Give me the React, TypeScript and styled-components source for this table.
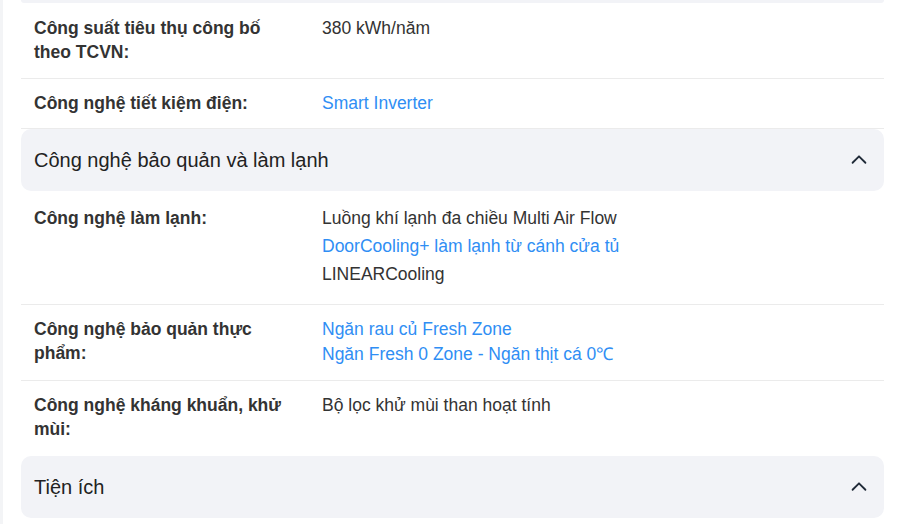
import React from 'react';
import styled, { createGlobalStyle } from 'styled-components';

const GlobalStyle = createGlobalStyle`
  html, body {
    margin: 0;
    padding: 0;
    background: #f3f4f6;
    font-family: 'Liberation Sans', Arial, sans-serif;
  }
`;

const Page = styled.div`
  margin-left: 3px;
  min-height: 524px;
  background: #fff;
  padding: 0 15px 0 18px;
  overflow: hidden;
`;

const HeaderTail = styled.div`
  height: 3px;
  background: #f2f3f7;
  border-radius: 0 0 10px 10px;
`;

const Header = styled.div`
  display: flex;
  align-items: center;
  justify-content: space-between;
  height: 62px;
  padding: 0 14px 0 13px;
  background: #f2f3f7;
  border-radius: 10px;
  color: #222;
  font-size: 20px;

  svg {
    width: 22px;
    height: 22px;
    color: #1f2937;
  }
`;

const Row = styled.div<{ $last?: boolean; $pt: number; $pb: number }>`
  display: grid;
  grid-template-columns: 288px 1fr;
  padding: ${(p) => p.$pt}px 13px ${(p) => p.$pb}px;
  border-bottom: ${(p) => (p.$last ? 'none' : '1px solid #ebebeb')};
`;

const Label = styled.div`
  padding-right: 30px;
  font-size: 17.5px;
  font-weight: 700;
  line-height: 24px;
  color: #333;
`;

const Values = styled.div<{ $gap: number }>`
  display: flex;
  flex-direction: column;
  gap: ${(p) => p.$gap}px;
`;

const Value = styled.span<{ $link?: boolean }>`
  font-size: 17.5px;
  line-height: 24px;
  color: ${(p) => (p.$link ? '#2f8ef4' : '#333')};
`;

const Chevron = () => (
  <svg viewBox="0 0 24 24" fill="none" stroke="currentColor" strokeWidth="2" strokeLinecap="round" strokeLinejoin="round">
    <path d="M5 15l7-7 7 7" />
  </svg>
);

type Item = { text: string; link?: boolean };

type SpecProps = { label: string; items: Item[]; gap?: number; last?: boolean; pt?: number; pb?: number };

const Spec = ({ label, items, gap = 4, last, pt = 12, pb = 14 }: SpecProps) => (
  <Row $last={last} $pt={pt} $pb={pb}>
    <Label>{label}</Label>
    <Values $gap={gap}>
      {items.map((it) => (
        <Value key={it.text} $link={it.link}>{it.text}</Value>
      ))}
    </Values>
  </Row>
);

export default function App() {
  return (
    <>
      <GlobalStyle />
      <Page>
        <HeaderTail />
        <Spec label="Công suất tiêu thụ công bố theo TCVN:" items={[{ text: '380 kWh/năm' }]} pt={13} pb={14} />
        <Spec label="Công nghệ tiết kiệm điện:" items={[{ text: 'Smart Inverter', link: true }]} pt={12} pb={13} />
        <Header>
          Công nghệ bảo quản và làm lạnh
          <Chevron />
        </Header>
        <Spec
          label="Công nghệ làm lạnh:"
          gap={4}
          pt={15}
          pb={18}
          items={[
            { text: 'Luồng khí lạnh đa chiều Multi Air Flow' },
            { text: 'DoorCooling+ làm lạnh từ cánh cửa tủ', link: true },
            { text: 'LINEARCooling' },
          ]}
        />
        <Spec
          label="Công nghệ bảo quản thực phẩm:"
          gap={1}
          pt={12}
          pb={14}
          items={[
            { text: 'Ngăn rau củ Fresh Zone', link: true },
            { text: 'Ngăn Fresh 0 Zone - Ngăn thịt cá 0℃', link: true },
          ]}
        />
        <Spec label="Công nghệ kháng khuẩn, khử mùi:" items={[{ text: 'Bộ lọc khử mùi than hoạt tính' }]} last pt={12} pb={15} />
        <Header>
          Tiện ích
          <Chevron />
        </Header>
      </Page>
    </>
  );
}
